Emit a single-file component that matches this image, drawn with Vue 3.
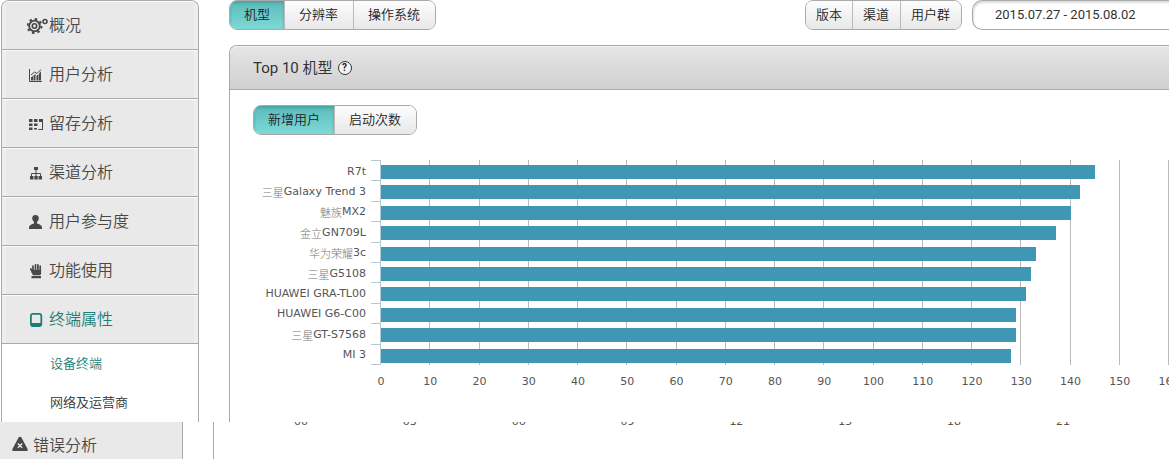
<script setup>
import { ref } from 'vue'

const navItems = [
  { icon: 'gear', label: '概况' },
  { icon: 'chart', label: '用户分析' },
  { icon: 'retain', label: '留存分析' },
  { icon: 'tree', label: '渠道分析' },
  { icon: 'user', label: '用户参与度' },
  { icon: 'hand', label: '功能使用' },
  { icon: 'device', label: '终端属性', active: true }
]
const subItems = [
  { label: '设备终端', active: true },
  { label: '网络及运营商' }
]

const dimensions = ['机型', '分辨率', '操作系统']
const dimension = ref('机型')
const metrics = ['新增用户', '启动次数']
const metric = ref('新增用户')
const filters = ['版本', '渠道', '用户群']
const dateRange = ref('2015.07.27 - 2015.08.02')

const axisMax = 160
const ticks = Array.from({ length: 17 }, (_, i) => i * 10)
const devices = [
  { brand: '', model: 'R7t', value: 145 },
  { brand: '三星', model: 'Galaxy Trend 3', value: 142 },
  { brand: '魅族', model: 'MX2', value: 140 },
  { brand: '金立', model: 'GN709L', value: 137 },
  { brand: '华为荣耀', model: '3c', value: 133 },
  { brand: '三星', model: 'G5108', value: 132 },
  { brand: '', model: 'HUAWEI GRA-TL00', value: 131 },
  { brand: '', model: 'HUAWEI G6-C00', value: 129 },
  { brand: '三星', model: 'GT-S7568', value: 129 },
  { brand: '', model: 'MI 3', value: 128 }
]
const hours = ['00', '03', '06', '09', '12', '15', '18', '21']
</script>

<template>
  <div class="page">
    <div class="upper">
      <nav class="sidebar">
        <a v-for="item in navItems" :key="item.label" href="#" class="nav-item" :class="{ active: item.active }">
          <svg class="nav-icon" viewBox="0 0 22 18" aria-hidden="true">
            <g v-if="item.icon === 'gear'" fill="none" stroke="currentColor">
              <circle cx="7.500" cy="9" r="5.300" stroke-width="1.800" />
              <circle cx="7.500" cy="9" r="7" stroke-width="2" stroke-dasharray="2.500 3" />
              <circle cx="7.500" cy="9" r="2.200" stroke-width="1.600" />
              <circle cx="18" cy="4.500" r="2" stroke-width="1.600" />
            </g>
            <g v-else-if="item.icon === 'chart'">
              <path d="M2.500 3v12.500H15" fill="none" stroke="currentColor" />
              <path d="M4 14.500v-3l2-1.500v4.500zM6.500 14.500V9.500l2-1.500v6.500zM9.500 14.500v-5l2-1v6zM12 14.500V7.500l2-2v9z" fill="currentColor" />
              <path d="M4 9l3.500-3 2.500 1.500L14 3.500" fill="none" stroke="currentColor" />
            </g>
            <g v-else-if="item.icon === 'retain'" fill="currentColor">
              <path d="M2 4h3.500v3H2zM7 4h3.500v3H7zM12 4h4v3h-4zM2 8.500h3.500v2.500H2zM7 8.500h3.500v2.500H7zM2 12.500h3.500v2.500H2zM7 13h3v1.500H7zM15 7h1v8h-4.500v-1h3.500z" />
            </g>
            <g v-else-if="item.icon === 'tree'">
              <path d="M9 5v8M4.500 13V9.500h9V13" fill="none" stroke="currentColor" />
              <path d="M7 3h4v3H7zM3 12h3.500v3.500H3zM7.300 12h3.500v3.500H7.300zM11.600 12H15v3.500h-3.400z" fill="currentColor" />
            </g>
            <g v-else-if="item.icon === 'user'" fill="currentColor">
              <path d="M8.500 2C6.200 2 5 3.500 5.200 5.600 5.400 7.400 6.200 8.300 7 9v1.600C4.500 11.300 2 12.300 2 14.500V16h13v-1.500c0-2.200-2.500-3.200-5-3.900V9c.8-.7 1.600-1.600 1.800-3.400C12 3.500 10.800 2 8.500 2z" />
            </g>
            <g v-else-if="item.icon === 'hand'">
              <path d="M6 9V4M8.500 8.500V2.800M10.900 8.500V2.800M13.200 9V4M3.800 7l2 3.500" fill="none" stroke="currentColor" stroke-width="1.700" stroke-linecap="round" />
              <path d="M5.100 8h9v4l-1 1.200H6L4.300 10zM4.500 14H14v2.200H4.500z" fill="currentColor" />
            </g>
            <g v-else>
              <rect x="3.900" y="2.900" width="10.400" height="12.200" rx="2" fill="none" stroke="currentColor" stroke-width="1.800" />
              <path d="M4 12h10v3H4z" fill="currentColor" />
            </g>
          </svg>
          <span>{{ item.label }}</span>
        </a>
        <a v-for="item in subItems" :key="item.label" href="#" class="sub-item" :class="{ active: item.active }">{{ item.label }}</a>
      </nav>

      <main class="content">
        <div class="toolbar">
          <div class="group">
            <button v-for="d in dimensions" :key="d" type="button" :class="{ on: d === dimension }" @click="dimension = d">{{ d }}</button>
          </div>
          <div class="filters">
            <div class="group compact">
              <button v-for="f in filters" :key="f" type="button">{{ f }}</button>
            </div>
            <input v-model="dateRange" class="date" type="text" aria-label="日期范围" readonly />
          </div>
        </div>

        <section class="panel">
          <header class="panel-head">
            <h2>Top 10 机型</h2>
            <button type="button" class="help">?</button>
          </header>
          <div class="panel-tabs">
            <div class="group">
              <button v-for="m in metrics" :key="m" type="button" :class="{ on: m === metric }" @click="metric = m">{{ m }}</button>
            </div>
          </div>
          <div class="chart">
            <div class="names">
              <div v-for="d in devices" :key="d.model" class="name"><span class="brand">{{ d.brand }}</span>{{ d.model }}</div>
            </div>
            <div class="marks">
              <i v-for="d in devices" :key="d.model"></i>
            </div>
            <div class="plot">
              <div class="lines"><i v-for="t in ticks.slice(1)" :key="t"></i></div>
              <div class="bars">
                <div v-for="d in devices" :key="d.model" class="track">
                  <div class="bar" :style="{ width: (d.value / axisMax) * 100 + '%' }"></div>
                </div>
              </div>
            </div>
            <div class="axis">
              <span v-for="t in ticks" :key="t">{{ t }}</span>
            </div>
          </div>
        </section>
      </main>
    </div>

    <div class="lower">
      <nav class="lower-nav">
        <a href="#" class="lower-item">
          <svg viewBox="0 0 16 16" aria-hidden="true">
            <path d="M6.600 1.500Q8 0 9.400 1.500L15.600 13q.8 2-1.300 2H1.700Q-.4 15 .4 13z" fill="currentColor" />
            <path d="M5.800 7.500l4.400 4.400M10.200 7.500l-4.400 4.400" stroke="#eee" stroke-width="1.300" />
          </svg>
          <span>错误分析</span>
        </a>
      </nav>
      <div class="lower-panel">
        <div class="hours"><span v-for="h in hours" :key="h">{{ h }}</span></div>
      </div>
    </div>
  </div>
</template>

<style>
body {
  margin: 0;
  background: #fff;
}
</style>

<style scoped>
.page {
  overflow: hidden;
  min-height: 100vh;
  display: flex;
  flex-direction: column;
  font-family: Roboto, "Noto Sans CJK SC", sans-serif;
  color: #333;
}
.page * {
  box-sizing: border-box;
}
a {
  text-decoration: none;
  color: inherit;
}
.upper {
  display: flex;
  gap: 30px;
  padding-left: 1px;
}
.sidebar {
  flex: none;
  width: 198px;
  border: 1px solid #aaa;
  border-bottom: 0;
  border-radius: 8px 8px 0 0;
  overflow: hidden;
}
.nav-item {
  display: flex;
  align-items: center;
  height: 49px;
  padding: 2px 0 0 25px;
  border-bottom: 1px solid #aaa;
  background: #e9e9e9;
  box-shadow: inset 0 1px #fafafa, inset 4px 0 #eee, inset -4px 0 #eee;
  font-size: 16px;
  font-weight: 350;
  line-height: 24px;
  color: #484848;
}
.nav-icon {
  width: 22px;
  height: 18px;
}
.nav-item.active,
.sub-item.active {
  color: #1c7e77;
}
.sub-item {
  display: block;
  height: 39px;
  padding-left: 48px;
  font-size: 13px;
  font-weight: 350;
  line-height: 39px;
}
.content {
  flex: 1;
  min-width: 0;
  display: flex;
  flex-direction: column;
  gap: 15px;
}
.toolbar,
.filters {
  display: flex;
  justify-content: space-between;
}
.filters {
  gap: 10px;
}
.group {
  display: flex;
  height: 30px;
  border: 1px solid #aaa;
  border-radius: 8px;
  overflow: hidden;
}
.group button {
  margin: 0;
  padding: 0 14px 1px;
  border: 0;
  background: linear-gradient(#fdfdfd, #e8e8e8);
  font-family: inherit;
  font-size: 13px;
  font-weight: 350;
  line-height: 20px;
  color: #222;
}
.group button + button {
  padding-right: 15px;
  border-left: 1px solid #bbb;
}
.group.compact button {
  padding-left: 10px;
  padding-right: 10px;
}
.group.compact button + button {
  padding-right: 11px;
}
.group .on {
  background: linear-gradient(#5bbab9, #7fdad7);
  box-shadow: inset 0 2px 3px #4aa3a3;
}
.date {
  width: 197px;
  height: 30px;
  padding: 0 0 2px 22px;
  border: 1px solid #aaa;
  border-right: 0;
  border-radius: 10px 0 0 10px;
  box-shadow: inset 1px 2px 2px #ddd;
  background: #fff;
  font-family: inherit;
  font-size: 13px;
  color: #333;
}
.panel {
  flex: 1;
  border: 1px solid #aaa;
  border-width: 1px 0 0 1px;
  border-radius: 8px 0 0 0;
}
.panel-head {
  display: flex;
  align-items: center;
  gap: 5px;
  height: 44px;
  padding-left: 23px;
  border-bottom: 1px solid #aaa;
  border-radius: 8px 0 0 0;
  background: linear-gradient(#e6e6e6, #d0d0d0);
  box-shadow: inset 0 1px #f2f2f2;
}
h2 {
  margin: 0;
  font-size: 15px;
  font-weight: 400;
  line-height: 22px;
}
.help {
  width: 14px;
  height: 14px;
  padding: 0;
  border: 1px solid #333;
  border-radius: 50%;
  background: #f4f4f4;
  font: 700 10px/12px Roboto, sans-serif;
  color: #222;
  text-align: center;
}
.panel-tabs {
  display: flex;
  padding: 15px 23px 25px;
}
.chart {
  display: grid;
  grid-template-columns: 136px 15px 1fr;
  grid-template-rows: 205px 32px;
  font-family: "DejaVu Sans", "Noto Sans CJK SC", sans-serif;
  font-size: 11px;
  color: #555;
}
.names,
.marks,
.bars {
  display: grid;
  grid-template-rows: repeat(10, 1fr);
  height: 204px;
}
.name {
  display: flex;
  align-items: center;
  justify-content: flex-end;
  padding-top: 3px;
  line-height: 16px;
  white-space: nowrap;
}
.brand {
  font-family: "Noto Sans CJK SC", sans-serif;
  font-weight: 300;
  color: #777;
}
.marks {
  height: 205px;
  margin-left: 5px;
  border-right: 1px solid #b4cbd4;
  border-bottom: 1px solid #b4cbd4;
}
.marks i {
  border-top: 1px solid #b4cbd4;
}
.plot {
  display: grid;
  grid-template: 205px / 1fr;
}
.lines,
.bars {
  grid-area: 1 / 1;
}
.lines {
  display: grid;
  grid-template-columns: repeat(16, 1fr);
}
.lines i {
  border-right: 1px solid #bbb;
}
.track {
  padding-top: 5px;
}
.bar {
  height: 14px;
  background: #4096b5;
}
.axis {
  grid-column: 3;
  display: flex;
  justify-content: space-between;
  padding-top: 9px;
}
.axis span,
.hours span {
  display: flex;
  justify-content: center;
  width: 0;
  line-height: 16px;
}
.lower {
  display: flex;
  flex: 1;
  gap: 30px;
  min-height: 37px;
}
.lower-nav {
  flex: none;
  width: 183px;
  border-right: 1px solid #aaa;
  background: #e9e9e9;
}
.lower-item {
  display: flex;
  align-items: center;
  gap: 5px;
  height: 44px;
  padding-left: 12px;
  font-size: 16px;
  font-weight: 350;
  color: #484848;
}
.lower-item svg {
  width: 16px;
  height: 16px;
}
.lower-panel {
  flex: 1;
  border-left: 1px solid #aaa;
}
.hours {
  display: flex;
  align-items: flex-end;
  justify-content: space-between;
  height: 8px;
  padding: 0 106px 0 87px;
  overflow: hidden;
  font-family: "DejaVu Sans", sans-serif;
  font-size: 11px;
  color: #555;
}
</style>
